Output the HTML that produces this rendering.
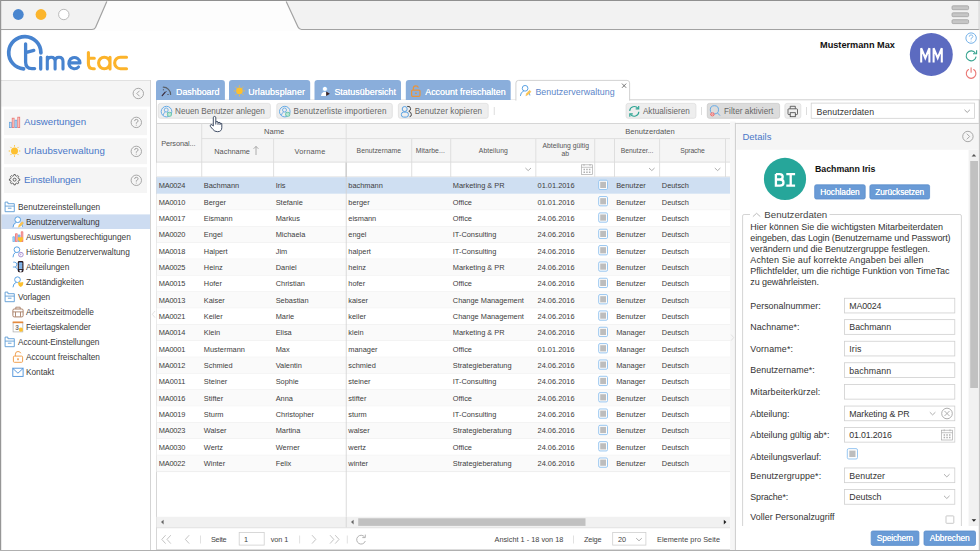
<!DOCTYPE html><html><head><meta charset="utf-8"><title>TimeTac</title><style>
*{box-sizing:border-box;margin:0;padding:0}
html,body{width:980px;height:551px;overflow:hidden;background:#fff}
body{font-family:"Liberation Sans",sans-serif;color:#404040;position:relative;font-size:8px}
.abs{position:absolute}
.t{position:absolute;white-space:nowrap;line-height:1}
svg{position:absolute;overflow:visible}
</style></head><body>
<svg style="left:0;top:0" width="980" height="551"><rect x="0.00" y="0.00" width="980.00" height="30.00" fill="#f2f2f2"/></svg>
<svg style="left:0;top:0" width="980" height="31" viewBox="0 0 980 31">
<path d="M0 29.5 H92 Q94.500 29.5 95.500 27.500 L106.500 2.500 Q107.500 1 109 1 H285 Q286.500 1 287.300 2.500 L298 27 Q299.200 29.500 301.500 29.500 H980 V31 H0 Z" fill="#fdfdfd"/>
<path d="M0 29.500 H92 Q94.500 29.500 95.500 27.500 L106.800 1.500 M286.200 1.500 L298 27 Q299.200 29.500 301.500 29.500 H980" fill="none" stroke="#a2a2a2" stroke-width="1.200"/>
</svg>
<svg style="left:0;top:0" width="60" height="30">
<circle cx="18.300" cy="14.500" r="5.400" fill="#4a86cf"/>
<circle cx="41" cy="14.500" r="5.400" fill="#fbb52d"/>
<circle cx="63.800" cy="14.500" r="5.200" fill="#fff" stroke="#aaa" stroke-width="0.800"/>
</svg>
<svg style="left:0;top:0" width="980" height="551"><rect x="952.00" y="5.80" width="16.60" height="3.90" fill="#c6c6c6" rx="1.10" stroke="#a2a2a2" stroke-width="0.8"/></svg>
<svg style="left:0;top:0" width="980" height="551"><rect x="952.00" y="12.80" width="16.60" height="3.90" fill="#c6c6c6" rx="1.10" stroke="#a2a2a2" stroke-width="0.8"/></svg>
<svg style="left:0;top:0" width="980" height="551"><rect x="952.00" y="19.70" width="16.60" height="3.90" fill="#c6c6c6" rx="1.10" stroke="#a2a2a2" stroke-width="0.8"/></svg>
<svg style="left:0;top:0" width="140" height="80" viewBox="0 0 140 80" fill="none" stroke-linecap="round" stroke-linejoin="round">
<g stroke="#4783cf">
<path d="M40.900 52.800 A16.100 16.100 0 1 0 23.600 68.800" stroke-width="3.700"/>
<path d="M25.600 43.800 V62 Q25.600 68.600 32 68.600 H34.600 M25.600 52.600 L33.800 50.400" stroke-width="3.300"/>
<path d="M40.700 57.500 V69" stroke-width="3.300"/>
<path d="M47.300 57 V69 M47.300 61.500 Q47.300 57.300 51.200 57.300 Q55.100 57.300 55.100 61.500 V69 M55.100 61.500 Q55.100 57.300 59 57.300 Q63 57.300 63 61.500 V69" stroke-width="3.100"/>
<path d="M69 62.900 H80 A5.600 5.600 0 1 0 78.500 67 " stroke-width="3.100"/>
</g>
<g stroke="#fcb32a" stroke-width="3.100">
<path d="M88.400 52.500 V63.500 Q88.400 68.700 93 68.700 H94.300 M88.400 58.300 H94.300"/>
<path d="M110 57.200 V69 M110 63 A5.700 5.700 0 1 0 98.600 63 A5.700 5.700 0 1 0 110 63"/>
<path d="M126.500 57.200 H120.400 A5.750 5.750 0 1 0 120.400 68.700 H126.500"/>
</g>
</svg>
<div class="t" style="left:820.00px;top:41px;font-size:9.2px;color:#111;font-weight:bold;letter-spacing:-0.012px;">Mustermann Max</div>
<svg style="left:900px;top:30px" width="80" height="50" viewBox="900 30 80 50" fill="none">
<circle cx="931.300" cy="54.500" r="21.500" fill="#5c6bc0"/>
<path d="M921.200 62.500 V48.200 L925.300 58 L929.400 48.200 V62.500 M933.600 62.500 V48.200 L937.700 58 L941.800 48.200 V62.500" stroke="#fff" stroke-width="2.050" stroke-linejoin="miter"/>
<circle cx="971.100" cy="38.100" r="5.200" stroke="#74b1e8" stroke-width="1"/>
<path d="M969.300 36.700 Q969.300 34.900 971.100 34.900 Q972.900 34.900 972.900 36.500 Q972.900 37.600 971.100 38.400 V39.500 M971.100 40.800 V41.600" stroke="#86baea" stroke-width="1"/>
<path d="M975.400 53.200 A5 5 0 1 0 976.100 56.600" stroke="#36a38f" stroke-width="1.100"/>
<path d="M976.600 50.200 V53.800 H973" stroke="#36a38f" stroke-width="1.100"/>
<path d="M968.500 69.500 A4.800 4.800 0 1 0 973.700 69.500 M971.100 67.800 V72.200" stroke="#ea7774" stroke-width="1.100" stroke-linecap="round"/>
</svg>
<div class="abs" style="left:1.2px;top:80px;width:149.8px;height:471px;background:#fff;border-top:1px solid #d4d4d4;border-right:1px solid #d4d4d4"></div>
<svg style="left:0;top:0" width="980" height="551"><rect x="1.20" y="80.60" width="148.80" height="26.00" fill="#f5f5f5"/></svg>
<svg style="left:0;top:0" width="980" height="551" fill="none" stroke="#9a9a9a" stroke-width="0.85"><circle cx="138.3" cy="93.5" r="5.200"/><path d="M139.60000000000002 90.7 L136.8 93.5 L139.60000000000002 96.3"/></svg>
<svg style="left:0;top:0" width="980" height="551"><rect x="4.00" y="109.30" width="143.00" height="25.80" fill="#f5f5f5"/></svg>
<div class="t" style="left:24.10px;top:117px;font-size:9.7px;color:#4a78c8;letter-spacing:-0.001px;">Auswertungen</div>
<svg style="left:0;top:0" width="980" height="551" fill="none" stroke="#9a9a9a" stroke-width="0.85"><circle cx="136.3" cy="122.39999999999999" r="5.200"/><path d="M134.60000000000002 121.1 Q134.60000000000002 119.39999999999999 136.3 119.39999999999999 Q138.10000000000002 119.39999999999999 138.10000000000002 120.89999999999999 Q138.10000000000002 121.99999999999999 136.3 122.8 V123.69999999999999 M136.3 124.8 V125.6" stroke-width="0.9"/></svg>
<svg style="left:0;top:0" width="980" height="551"><rect x="4.00" y="138.30" width="143.00" height="25.80" fill="#f5f5f5"/></svg>
<div class="t" style="left:24.10px;top:146px;font-size:9.7px;color:#4a78c8;letter-spacing:0.029px;">Urlaubsverwaltung</div>
<svg style="left:0;top:0" width="980" height="551" fill="none" stroke="#9a9a9a" stroke-width="0.85"><circle cx="136.3" cy="151.4" r="5.200"/><path d="M134.60000000000002 150.1 Q134.60000000000002 148.4 136.3 148.4 Q138.10000000000002 148.4 138.10000000000002 149.9 Q138.10000000000002 151.0 136.3 151.8 V152.70000000000002 M136.3 153.8 V154.6" stroke-width="0.9"/></svg>
<svg style="left:0;top:0" width="980" height="551"><rect x="4.00" y="167.20" width="143.00" height="25.80" fill="#f5f5f5"/></svg>
<div class="t" style="left:24.10px;top:175px;font-size:9.7px;color:#4a78c8;letter-spacing:-0.112px;">Einstellungen</div>
<svg style="left:0;top:0" width="980" height="551" fill="none" stroke="#9a9a9a" stroke-width="0.85"><circle cx="136.3" cy="180.29999999999998" r="5.200"/><path d="M134.60000000000002 178.99999999999997 Q134.60000000000002 177.29999999999998 136.3 177.29999999999998 Q138.10000000000002 177.29999999999998 138.10000000000002 178.79999999999998 Q138.10000000000002 179.89999999999998 136.3 180.7 V181.6 M136.3 182.7 V183.49999999999997" stroke-width="0.9"/></svg>
<svg style="left:0;top:0" width="60" height="200" viewBox="0 0 60 200">
<g stroke-width="0.8">
<rect x="9.400" y="122.300" width="1.900" height="5.300" fill="#c9e1f6" stroke="#6aa6de"/>
<rect x="12.200" y="118.200" width="1.900" height="9.400" fill="#fad2d0" stroke="#ea7570"/>
<rect x="15" y="120.200" width="1.900" height="7.400" fill="#c9e1f6" stroke="#6aa6de"/>
<rect x="17.800" y="117.200" width="1.900" height="10.400" fill="#fad2d0" stroke="#ea7570"/>
</g>
<g stroke="#fdc02f" stroke-width="1" stroke-linecap="round">
<circle cx="14.500" cy="151" r="3.500" fill="#fdc02f" stroke="none"/>
<path d="M14.500 145.600 V146.200 M14.500 155.800 V156.400 M9.100 151 H9.700 M19.300 151 H19.900 M10.700 147.200 L11.100 147.600 M17.900 154.400 L18.300 154.800 M18.300 147.200 L17.900 147.600 M11.100 154.400 L10.700 154.800"/>
</g>
<g fill="none" stroke="#555" stroke-width="0.900" stroke-linejoin="round">
<path d="M13.93 174.54 L15.27 174.54 L15.63 175.83 L16.61 176.24 L17.77 175.58 L18.72 176.53 L18.06 177.69 L18.47 178.67 L19.76 179.03 L19.76 180.37 L18.47 180.73 L18.06 181.71 L18.72 182.87 L17.77 183.82 L16.61 183.16 L15.63 183.57 L15.27 184.86 L13.93 184.86 L13.57 183.57 L12.59 183.16 L11.43 183.82 L10.48 182.87 L11.14 181.71 L10.73 180.73 L9.44 180.37 L9.44 179.03 L10.73 178.67 L11.14 177.69 L10.48 176.53 L11.43 175.58 L12.59 176.24 L13.57 175.83 Z"/>
<circle cx="14.6" cy="179.7" r="1.500" stroke-width="0.9"/>
</g>
</svg>
<svg style="left:0;top:0" width="980" height="551"><path d="M5.1000000000000005 211.70000000000002 V202.10000000000002 H7.9 V203.70000000000002 H14.3 V211.70000000000002 Z M5.1000000000000005 206.10000000000002 H14.3 M7.9 208.20000000000002 H11.5" fill="#fff" stroke="#5b9bd5" stroke-width="0.900" stroke-linejoin="round"/></svg>
<div class="t" style="left:18.00px;top:203px;font-size:8.3px;color:#3a3a3a;letter-spacing:0.003px;">Benutzereinstellungen</div>
<svg style="left:0;top:0" width="980" height="551"><rect x="1.50" y="214.40" width="148.50" height="14.60" fill="#cddcf1"/></svg>
<svg style="left:0;top:0" width="980" height="551"><path d="M13.399999999999999 227.20000000000002 Q13.5 223.5 16.2 222.60000000000002 H19.2 Q21.799999999999997 223.5 22.2 227.20000000000002 Z" fill="#fff"/><circle cx="17.70" cy="219.70" r="2.850" fill="#fff" stroke="#5aa2e3" stroke-width="1"/><path d="M13.00 226.90 Q13.10 223.70 16.10 222.40" fill="none" stroke="#5aa2e3" stroke-width="1" stroke-linecap="round"/><path d="M21.1 223.10000000000002 Q22.2 224.3 22.5 226.9" fill="none" stroke="#5aa2e3" stroke-width="0.9"/><path d="M18.4 227.20000000000002 L19.1 224.8 L22.2 221.70000000000002 L23.6 223.10000000000002 L20.5 226.20000000000002 Z" fill="#fbc54f" stroke="#f2b13c" stroke-width="0.4"/></svg>
<div class="t" style="left:25.90px;top:218px;font-size:8.3px;color:#3a3a3a;letter-spacing:0.026px;">Benutzerverwaltung</div>
<svg style="left:0;top:0" width="980" height="551"><rect x="12.5" y="236.3" width="2.400" height="5.800" rx="0.9" fill="#7ab8ea"/><rect x="13.299999999999999" y="237.3" width="0.800" height="4" fill="#b5d8f4"/><rect x="15.0" y="233.20000000000002" width="2.700" height="8.900" rx="0.9" fill="#ef8080"/><rect x="15.95" y="234.3" width="0.800" height="7" fill="#f7b4b4"/><rect x="17.799999999999997" y="234.5" width="2.700" height="7.600" rx="0.9" fill="#7ab8ea"/><rect x="20.799999999999997" y="231.20000000000002" width="2.500" height="10.900" rx="0.9" fill="#ef8080"/><rect x="21.65" y="232.3" width="0.800" height="5" fill="#f7b4b4"/><path d="M18.0 237.20000000000002 H23.0 V239.20000000000002 Q22.799999999999997 241.10000000000002 20.5 242.20000000000002 Q18.2 241.10000000000002 18.0 239.20000000000002 Z" fill="#fdc02f"/></svg>
<div class="t" style="left:25.90px;top:233px;font-size:8.3px;color:#3a3a3a;letter-spacing:-0.013px;">Auswertungsberechtigungen</div>
<svg style="left:0;top:0" width="980" height="551"><circle cx="16.90" cy="249.70" r="2.850" fill="#fff" stroke="#5aa2e3" stroke-width="1"/><path d="M13.00 256.90 Q13.10 253.70 15.30 252.40" fill="none" stroke="#5aa2e3" stroke-width="1" stroke-linecap="round"/><circle cx="20.9" cy="254.60000000000002" r="2.300" fill="#fff" stroke="#a48bd0" stroke-width="0.950"/><path d="M20.9 253.4 V254.8 H19.9" fill="none" stroke="#a48bd0" stroke-width="0.8"/></svg>
<div class="t" style="left:25.90px;top:248px;font-size:8.3px;color:#3a3a3a;letter-spacing:0.008px;">Historie Benutzerverwaltung</div>
<svg style="left:0;top:0" width="980" height="551"><rect x="18.4" y="261.7" width="4.400" height="9.800" rx="0.7" fill="#5a9be0" stroke="#2a1a1f" stroke-width="1.300"/><path d="M18.6 263.90000000000003 H22.6 M18.6 266.0 H22.6 M18.6 268.1 H22.6" stroke="#cfe2f6" stroke-width="0.7"/><rect x="19.7" y="269.3" width="1.800" height="2.400" fill="#fff"/><rect x="17.799999999999997" y="269.1" width="5.600" height="0.900" fill="#2a1a1f"/><rect x="20.0" y="270.0" width="1.200" height="1.500" fill="#fff"/><path d="M13.2 262.2 H14.799999999999999 Q16.799999999999997 262.40000000000003 16.799999999999997 264.6 Q16.799999999999997 266.90000000000003 15.0 267.0 H12.899999999999999 M15.0 267.0 Q17.0 267.5 17.6 269.8 M16.7 264.6 L17.799999999999997 263.6" fill="none" stroke="#5aa2e3" stroke-width="0.9"/></svg>
<div class="t" style="left:25.90px;top:263px;font-size:8.3px;color:#3a3a3a;letter-spacing:-0.044px;">Abteilungen</div>
<svg style="left:0;top:0" width="980" height="551"><circle cx="17.50" cy="279.70" r="2.850" fill="#fff" stroke="#5aa2e3" stroke-width="1"/><path d="M13.00 286.90 Q13.10 283.70 15.90 282.40" fill="none" stroke="#5aa2e3" stroke-width="1" stroke-linecap="round"/><path d="M18.2 282.0 Q20.7 282.8 23.2 282.0 V284.0 Q23.0 286.0 20.7 287.0 Q18.4 286.0 18.2 284.0 Z" fill="#fdc02f"/></svg>
<div class="t" style="left:25.90px;top:278px;font-size:8.3px;color:#3a3a3a;letter-spacing:-0.036px;">Zuständigkeiten</div>
<svg style="left:0;top:0" width="980" height="551"><path d="M5.1000000000000005 301.7 V292.09999999999997 H7.9 V293.7 H14.3 V301.7 Z M5.1000000000000005 296.09999999999997 H14.3 M7.9 298.2 H11.5" fill="#fff" stroke="#5b9bd5" stroke-width="0.900" stroke-linejoin="round"/></svg>
<div class="t" style="left:18.00px;top:293px;font-size:8.3px;color:#3a3a3a;letter-spacing:-0.095px;">Vorlagen</div>
<svg style="left:0;top:0" width="980" height="551"><rect x="12.899999999999999" y="309.0" width="10.200" height="7.900" rx="1.300" fill="#fff" stroke="#a98068" stroke-width="1"/><path d="M15.799999999999999 309.0 V307.2 H20.2 V309.0 M12.899999999999999 311.90000000000003 H23.1 M15.5 311.90000000000003 V316.7 M20.5 311.90000000000003 V316.7" fill="none" stroke="#a98068" stroke-width="0.9"/></svg>
<div class="t" style="left:25.90px;top:308px;font-size:8.3px;color:#3a3a3a;letter-spacing:0.011px;">Arbeitszeitmodelle</div>
<svg style="left:0;top:0" width="980" height="551"><rect x="13.1" y="322.3" width="9.700" height="9.600" fill="#fff" stroke="#b5b5b5" stroke-width="0.8"/><rect x="12.7" y="321.5" width="10.500" height="1.700" fill="#e58a3c"/><text x="15.2" y="330.1" font-family="Liberation Sans" font-size="6.500" font-weight="bold" fill="#777">3</text><circle cx="20.9" cy="329.7" r="2.100" fill="#fdc02f"/></svg>
<div class="t" style="left:25.90px;top:323px;font-size:8.3px;color:#3a3a3a;letter-spacing:-0.102px;">Feiertagskalender</div>
<svg style="left:0;top:0" width="980" height="551"><path d="M5.1000000000000005 346.7 V337.09999999999997 H7.9 V338.7 H14.3 V346.7 Z M5.1000000000000005 341.09999999999997 H14.3 M7.9 343.2 H11.5" fill="#fff" stroke="#5b9bd5" stroke-width="0.900" stroke-linejoin="round"/></svg>
<div class="t" style="left:18.00px;top:338px;font-size:8.3px;color:#3a3a3a;letter-spacing:-0.060px;">Account-Einstellungen</div>
<svg style="left:0;top:0" width="980" height="551"><rect x="13.399999999999999" y="356.1" width="9.200" height="6.200" rx="1" fill="#fff" stroke="#f0a050" stroke-width="1"/><path d="M15.399999999999999 356.1 V354.2 Q15.399999999999999 351.5 18.0 351.5 Q20.2 351.5 20.799999999999997 353.3" fill="none" stroke="#f0a050" stroke-width="1"/><rect x="17.2" y="358.3" width="1.600" height="1.900" fill="#f0a050"/></svg>
<div class="t" style="left:25.90px;top:353px;font-size:8.3px;color:#3a3a3a;letter-spacing:-0.039px;">Account freischalten</div>
<svg style="left:0;top:0" width="980" height="551"><rect x="12.799999999999999" y="368.2" width="10.300" height="8.200" fill="#fff" stroke="#4a90d9" stroke-width="0.900"/><path d="M12.799999999999999 368.40000000000003 L17.95 373.2 L23.1 368.40000000000003" fill="none" stroke="#4a90d9" stroke-width="0.9"/></svg>
<div class="t" style="left:25.90px;top:368px;font-size:8.3px;color:#3a3a3a;letter-spacing:-0.008px;">Kontakt</div>
<svg style="left:0;top:0" width="980" height="551"><rect x="156.00" y="99.00" width="1.00" height="452.00" fill="#d6d6d6"/></svg>
<svg style="left:0;top:0" width="980" height="551"><rect x="156.00" y="99.20" width="360.00" height="0.80" fill="#e9e9e9"/></svg>
<svg style="left:0;top:0" width="980" height="551"><path d="M156 100 V83 Q156 80 159 80 H221.9 Q224.9 80 224.9 83 V100 Z" fill="#8aaedb"/></svg>
<div class="t" style="left:176.00px;top:88px;font-size:8.9px;color:#fff;text-shadow:0 0 0.4px #fff;letter-spacing:-0.005px;">Dashboard</div>
<svg style="left:0;top:0" width="980" height="551"><path d="M229 100 V83 Q229 80 232 80 H307.2 Q310.2 80 310.2 83 V100 Z" fill="#8aaedb"/></svg>
<div class="t" style="left:248.20px;top:88px;font-size:8.9px;color:#fff;text-shadow:0 0 0.4px #fff;letter-spacing:0.124px;">Urlaubsplaner</div>
<svg style="left:0;top:0" width="980" height="551"><path d="M314.5 100 V83 Q314.5 80 317.5 80 H398 Q401 80 401 83 V100 Z" fill="#8aaedb"/></svg>
<div class="t" style="left:334.40px;top:88px;font-size:8.9px;color:#fff;text-shadow:0 0 0.4px #fff;letter-spacing:0.032px;">Statusübersicht</div>
<svg style="left:0;top:0" width="980" height="551"><path d="M405.8 100 V83 Q405.8 80 408.8 80 H507.7 Q510.7 80 510.7 83 V100 Z" fill="#8aaedb"/></svg>
<div class="t" style="left:425.20px;top:88px;font-size:8.9px;color:#fff;text-shadow:0 0 0.4px #fff;letter-spacing:0.034px;">Account freischalten</div>
<svg style="left:0;top:0" width="980" height="551"><rect x="629.00" y="99.30" width="351.00" height="1.00" fill="#cfcfcf"/></svg>
<svg style="left:0;top:0" width="980" height="551"><path d="M515.900 100.600 V83 Q515.900 80.400 518.500 80.400 H627 Q629.600 80.400 629.600 83 V100.600" fill="#fff" stroke="#cdcdcd" stroke-width="0.9"/></svg>
<div class="t" style="left:535.40px;top:88px;font-size:8.9px;color:#5b86c9;letter-spacing:0.055px;">Benutzerverwaltung</div>
<svg style="left:0;top:0" width="980" height="551"><path d="M622 83.600 L626.200 87.800 M626.200 83.600 L622 87.800" stroke="#666" stroke-width="0.9"/></svg>
<svg style="left:0;top:0" width="980" height="551" fill="none">
<path d="M163.300 87.200 A7.300 7.300 0 0 1 170.600 94.500" stroke="#5a6068" stroke-width="1.200" stroke-linecap="round"/><path d="M162.200 95.600 L165.200 92.200" stroke="#3a2a3a" stroke-width="1.200" stroke-linecap="round"/><path d="M163.400 89.400 V90 M166.500 91.300 L166.100 91.700 M167.600 94.500 H168.400" stroke="#5a6068" stroke-width="0.900" stroke-linecap="round"/>
<g stroke="#fdc02f" stroke-width="0.9" stroke-linecap="round"><circle cx="239.400" cy="90.900" r="3.300" fill="#fdc02f" stroke="none"/>
<path d="M239.400 85.700 V86.400 M239.400 95.400 V96.100 M234.200 90.900 H234.900 M243.900 90.900 H244.600 M235.700 87.200 L236.200 87.700 M242.600 94.100 L243.100 94.600 M243.100 87.200 L242.600 87.700 M236.200 94.100 L235.700 94.600"/></g>
<circle cx="324.900" cy="88.900" r="2.500" fill="#fff" stroke="#6aa6e4" stroke-width="0.600"/><path d="M321 95.900 Q321.200 92.600 323.600 91.900 H326.200 V95.900 Z" fill="#fff"/><path d="M326.200 91.500 L329.900 93.700 L326.200 95.900 Z" fill="#3a2020"/>
<rect x="411.600" y="90.100" width="8.400" height="6.200" rx="1" stroke="#ea943a" stroke-width="1.200"/><path d="M413.300 90.100 V88.200 Q413.300 85.800 415.800 85.800 Q417.900 85.800 418.400 87.600" stroke="#ea943a" stroke-width="1.200"/><ellipse cx="415.900" cy="93.300" rx="1.100" ry="0.800" fill="#ea943a"/>

</svg>
<svg style="left:0;top:0" width="980" height="551"><path d="M520.8000000000001 95.80000000000001 Q520.9 92.10000000000001 523.6 91.2 H526.6 Q529.2 92.10000000000001 529.6 95.80000000000001 Z" fill="#fff"/><circle cx="525.10" cy="88.30" r="2.850" fill="#fff" stroke="#5aa2e3" stroke-width="1"/><path d="M520.40 95.50 Q520.50 92.30 523.50 91.00" fill="none" stroke="#5aa2e3" stroke-width="1" stroke-linecap="round"/><path d="M528.5 91.7 Q529.6 92.9 529.9 95.5" fill="none" stroke="#5aa2e3" stroke-width="0.9"/><path d="M525.8000000000001 95.80000000000001 L526.5 93.4 L529.6 90.30000000000001 L531.0 91.7 L527.9 94.80000000000001 Z" fill="#fbc54f" stroke="#f2b13c" stroke-width="0.4"/></svg>
<svg style="left:0;top:0" width="980" height="551"><rect x="158.30" y="103.40" width="112.10" height="14.90" fill="#eeeeee" rx="2.10" stroke="#dedede" stroke-width="0.8"/></svg>
<div class="t" style="left:175.10px;top:108px;font-size:8.15px;color:#666;letter-spacing:-0.008px;">Neuen Benutzer anlegen</div>
<svg style="left:0;top:0" width="980" height="551"><rect x="276.80" y="103.40" width="115.50" height="14.90" fill="#eeeeee" rx="2.10" stroke="#dedede" stroke-width="0.8"/></svg>
<div class="t" style="left:293.60px;top:108px;font-size:8.15px;color:#666;letter-spacing:0.123px;">Benutzerliste importieren</div>
<svg style="left:0;top:0" width="980" height="551"><rect x="398.40" y="103.40" width="89.80" height="14.90" fill="#eeeeee" rx="2.10" stroke="#dedede" stroke-width="0.8"/></svg>
<div class="t" style="left:414.70px;top:108px;font-size:8.15px;color:#666;letter-spacing:0.091px;">Benutzer kopieren</div>
<svg style="left:0;top:0" width="980" height="551"><rect x="626.10" y="103.40" width="69.80" height="14.90" fill="#eeeeee" rx="2.10" stroke="#dedede" stroke-width="0.8"/></svg>
<div class="t" style="left:642.90px;top:108px;font-size:8.15px;color:#666;letter-spacing:0.037px;">Aktualisieren</div>
<svg style="left:0;top:0" width="980" height="551"><rect x="707.30" y="103.40" width="72.30" height="14.90" fill="#dcdcdc" rx="2.10" stroke="#c9c9c9" stroke-width="0.8"/></svg>
<div class="t" style="left:724.10px;top:108px;font-size:8.15px;color:#666;letter-spacing:0.063px;">Filter aktiviert</div>
<svg style="left:0;top:0" width="980" height="551"><rect x="784.90" y="103.40" width="15.90" height="14.90" fill="#eeeeee" rx="2.10" stroke="#dedede" stroke-width="0.8"/></svg>
<svg style="left:0;top:0" width="980" height="551"><rect x="493.80" y="107.00" width="0.80" height="8.00" fill="#d5d5d5"/></svg>
<svg style="left:0;top:0" width="980" height="551"><rect x="701.20" y="107.00" width="0.80" height="8.00" fill="#d5d5d5"/></svg>
<svg style="left:0;top:0" width="980" height="551"><rect x="806.10" y="107.00" width="0.80" height="8.00" fill="#d5d5d5"/></svg>
<svg style="left:0;top:0" width="980" height="551"><rect x="811.20" y="103.10" width="163.30" height="15.20" fill="#fff" stroke="#d0d0d0" stroke-width="0.8"/></svg>
<div class="t" style="left:816.50px;top:108px;font-size:8.7px;color:#333;letter-spacing:0.092px;">Benutzerdaten</div>
<svg style="left:0;top:0" width="980" height="551" fill="none"><path d="M964.500 109.800 L967.200 112.400 L969.900 109.800" stroke="#888" stroke-width="0.8"/></svg>
<svg style="left:0;top:0" width="980" height="551" fill="none"><circle cx="166.5" cy="111.6" r="5.300" stroke="#5fa8e6" stroke-width="0.950"/><circle cx="166.2" cy="110.0" r="2" stroke="#5fa8e6" stroke-width="0.850"/><path d="M163.1 115.39999999999999 Q163.3 112.69999999999999 165.3 112.19999999999999 M167.3 112.19999999999999 Q168.1 112.39999999999999 168.5 113.0" stroke="#5fa8e6" stroke-width="0.850"/><circle cx="169.4" cy="114.3" r="2.500" fill="#63c3a4"/><circle cx="169.4" cy="114.3" r="1.300" stroke="#fff" stroke-width="0.6"/><path d="M168.7 114.3 H170.1 M169.4 113.6 V115.0" stroke="#fff" stroke-width="0.5"/><circle cx="284.8" cy="111.6" r="5.300" stroke="#5fa8e6" stroke-width="0.950"/><circle cx="284.5" cy="110.0" r="2" stroke="#5fa8e6" stroke-width="0.850"/><path d="M281.40000000000003 115.39999999999999 Q281.6 112.69999999999999 283.6 112.19999999999999 M285.6 112.19999999999999 Q286.40000000000003 112.39999999999999 286.8 113.0" stroke="#5fa8e6" stroke-width="0.850"/><circle cx="287.7" cy="114.3" r="2.500" fill="#63c3a4"/><circle cx="287.7" cy="114.3" r="1.300" stroke="#fff" stroke-width="0.6"/><path d="M287.0 114.3 H288.40000000000003 M287.7 113.6 V115.0" stroke="#fff" stroke-width="0.5"/>
<path d="M407.200 106.400 Q410.600 105.900 410.600 108.700 Q410.600 110.700 408.800 111.300 Q411.400 112.100 411.400 114.700 Q411.400 116.500 409.600 116.700" stroke="#444" stroke-width="1"/>
<circle cx="404.700" cy="109" r="2.500" fill="#eee" stroke="#5aa2e3" stroke-width="1"/>
<rect x="401.400" y="112.100" width="7" height="5" rx="2.200" fill="#eee" stroke="#5aa2e3" stroke-width="1"/>
<g stroke="#2fa594" stroke-width="1.150">
<path d="M629.700 111 A4.600 4.600 0 0 1 638 108.400"/><path d="M638.700 105.900 V108.900 H635.700" stroke-linejoin="miter"/>
<path d="M638.800 111.700 A4.600 4.600 0 0 1 630.500 114.300"/><path d="M629.800 116.800 V113.800 H632.800"/>
</g>
<circle cx="714.400" cy="109.800" r="4.100" stroke="#5fa8e6" stroke-width="0.950"/><path d="M717.400 112.800 L720 115.600" stroke="#5fa8e6" stroke-width="1"/>
<circle cx="712.400" cy="114.300" r="2.100" fill="#ea6b6b"/><ellipse cx="712.400" cy="114.300" rx="0.7" ry="1.100" stroke="#fff" stroke-width="0.5"/>
<g stroke="#444" stroke-width="0.800" fill="#eee"><path d="M790.200 108.800 V106.300 H795.300 V108.800"/><rect x="788" y="108.800" width="9.500" height="5.800" rx="0.8"/><rect x="790.200" y="112.700" width="5.100" height="4"/></g>
</svg>
<div class="abs" style="left:156.5px;top:123px;width:573.5px;height:39.2px;background:#f5f5f5;border-top:1px solid #d6d6d6"></div>
<svg style="left:0;top:0" width="980" height="551"><rect x="201.70" y="138.20" width="528.30" height="0.90" fill="#dcdcdc"/></svg>
<svg style="left:0;top:0" width="980" height="551"><rect x="156.50" y="161.70" width="573.50" height="1.00" fill="#d6d6d6"/></svg>
<svg style="left:0;top:0" width="980" height="551"><rect x="156.50" y="162.70" width="573.50" height="14.30" fill="#fff"/></svg>
<svg style="left:0;top:0" width="980" height="551"><rect x="156.50" y="176.40" width="573.50" height="0.80" fill="#e2e2e2"/></svg>
<svg style="left:0;top:0" width="980" height="551"><rect x="201.30" y="123.50" width="0.90" height="53.50" fill="#dcdcdc"/></svg>
<svg style="left:0;top:0" width="980" height="551"><rect x="273.20" y="139.00" width="0.90" height="38.00" fill="#dcdcdc"/></svg>
<svg style="left:0;top:0" width="980" height="551"><rect x="411.30" y="139.00" width="0.90" height="38.00" fill="#dcdcdc"/></svg>
<svg style="left:0;top:0" width="980" height="551"><rect x="450.30" y="139.00" width="0.90" height="38.00" fill="#dcdcdc"/></svg>
<svg style="left:0;top:0" width="980" height="551"><rect x="535.40" y="139.00" width="0.90" height="38.00" fill="#dcdcdc"/></svg>
<svg style="left:0;top:0" width="980" height="551"><rect x="594.30" y="139.00" width="0.90" height="38.00" fill="#dcdcdc"/></svg>
<svg style="left:0;top:0" width="980" height="551"><rect x="614.10" y="139.00" width="0.90" height="38.00" fill="#dcdcdc"/></svg>
<svg style="left:0;top:0" width="980" height="551"><rect x="659.20" y="139.00" width="0.90" height="38.00" fill="#dcdcdc"/></svg>
<svg style="left:0;top:0" width="980" height="551"><rect x="725.00" y="139.00" width="0.90" height="38.00" fill="#dcdcdc"/></svg>
<div class="t" style="left:178.25px;top:140px;font-size:7.4px;color:#555;transform:translateX(-50%);letter-spacing:-0.107px;">Personal...</div>
<div class="t" style="left:274.20px;top:128px;font-size:7.6px;color:#555;transform:translateX(-50%);letter-spacing:0.009px;">Name</div>
<div class="t" style="left:650.01px;top:128px;font-size:7.6px;color:#555;transform:translateX(-50%);letter-spacing:0.013px;">Benutzerdaten</div>
<div class="t" style="left:214.30px;top:148px;font-size:7.4px;color:#555;letter-spacing:-0.012px;">Nachname</div>
<svg style="left:0;top:0" width="980" height="551" fill="none"><path d="M256 155 V146.400 M253.600 148.800 L256 146.400 L258.400 148.800" stroke="#999" stroke-width="0.8"/></svg>
<div class="t" style="left:310.01px;top:148px;font-size:7.4px;color:#555;transform:translateX(-50%);letter-spacing:0.213px;">Vorname</div>
<div class="t" style="left:378.81px;top:148px;font-size:6.8px;color:#555;transform:translateX(-50%);letter-spacing:0.016px;">Benutzername</div>
<div class="t" style="left:430.34px;top:148px;font-size:6.8px;color:#555;transform:translateX(-50%);letter-spacing:0.073px;">Mitarbe...</div>
<div class="t" style="left:493.34px;top:148px;font-size:6.8px;color:#555;transform:translateX(-50%);letter-spacing:0.080px;">Abteilung</div>
<div class="t" style="left:565.70px;top:143px;font-size:6.8px;color:#555;transform:translateX(-50%);letter-spacing:-0.000px;">Abteilung gültig</div>
<div class="t" style="left:565.20px;top:151px;font-size:6.8px;color:#555;transform:translateX(-50%);">ab</div>
<div class="t" style="left:637.01px;top:148px;font-size:6.8px;color:#555;transform:translateX(-50%);letter-spacing:0.019px;">Benutzer...</div>
<div class="t" style="left:692.43px;top:148px;font-size:6.8px;color:#555;transform:translateX(-50%);letter-spacing:-0.138px;">Sprache</div>
<svg style="left:0;top:0" width="980" height="551" fill="none" stroke="#999" stroke-width="0.8">
<path d="M525.400 168 L528.200 170.600 L531 168 M649 168 L651.800 170.600 L654.600 168 M714.800 168 L717.600 170.600 L720.400 168"/>
<g stroke="#aaa" stroke-width="0.7"><rect x="581.400" y="164.800" width="11.200" height="9.800"/><path d="M581.400 167.300 H592.600 M584 164 V166 M590 164 V166"/><path d="M583.500 169.600 H585 M586.200 169.600 H587.700 M588.900 169.600 H590.400 M583.500 172.200 H585 M586.200 172.200 H587.700 M588.900 172.200 H590.400" stroke-width="1.500" stroke="#b0b0b0"/></g>
</svg>
<svg style="left:0;top:0" width="980" height="551"><rect x="156.5" y="177.20" width="573.5" height="16.64" fill="#cfdff2"/><rect x="156.5" y="193.84" width="573.5" height="16.34" fill="#fafafa"/><rect x="156.5" y="209.73" width="573.5" height="0.9" fill="#ececec"/><rect x="156.5" y="210.18" width="573.5" height="16.34" fill="#fff"/><rect x="156.5" y="226.07" width="573.5" height="0.9" fill="#ececec"/><rect x="156.5" y="226.52" width="573.5" height="16.34" fill="#fafafa"/><rect x="156.5" y="242.41" width="573.5" height="0.9" fill="#ececec"/><rect x="156.5" y="242.86" width="573.5" height="16.34" fill="#fff"/><rect x="156.5" y="258.75" width="573.5" height="0.9" fill="#ececec"/><rect x="156.5" y="259.20" width="573.5" height="16.34" fill="#fafafa"/><rect x="156.5" y="275.09" width="573.5" height="0.9" fill="#ececec"/><rect x="156.5" y="275.54" width="573.5" height="16.34" fill="#fff"/><rect x="156.5" y="291.43" width="573.5" height="0.9" fill="#ececec"/><rect x="156.5" y="291.88" width="573.5" height="16.34" fill="#fafafa"/><rect x="156.5" y="307.77" width="573.5" height="0.9" fill="#ececec"/><rect x="156.5" y="308.22" width="573.5" height="16.34" fill="#fff"/><rect x="156.5" y="324.11" width="573.5" height="0.9" fill="#ececec"/><rect x="156.5" y="324.56" width="573.5" height="16.34" fill="#fafafa"/><rect x="156.5" y="340.45" width="573.5" height="0.9" fill="#ececec"/><rect x="156.5" y="340.90" width="573.5" height="16.34" fill="#fff"/><rect x="156.5" y="356.79" width="573.5" height="0.9" fill="#ececec"/><rect x="156.5" y="357.24" width="573.5" height="16.34" fill="#fafafa"/><rect x="156.5" y="373.13" width="573.5" height="0.9" fill="#ececec"/><rect x="156.5" y="373.58" width="573.5" height="16.34" fill="#fff"/><rect x="156.5" y="389.47" width="573.5" height="0.9" fill="#ececec"/><rect x="156.5" y="389.92" width="573.5" height="16.34" fill="#fafafa"/><rect x="156.5" y="405.81" width="573.5" height="0.9" fill="#ececec"/><rect x="156.5" y="406.26" width="573.5" height="16.34" fill="#fff"/><rect x="156.5" y="422.15" width="573.5" height="0.9" fill="#ececec"/><rect x="156.5" y="422.60" width="573.5" height="16.34" fill="#fafafa"/><rect x="156.5" y="438.49" width="573.5" height="0.9" fill="#ececec"/><rect x="156.5" y="438.94" width="573.5" height="16.34" fill="#fff"/><rect x="156.5" y="454.83" width="573.5" height="0.9" fill="#ececec"/><rect x="156.5" y="455.28" width="573.5" height="16.34" fill="#fafafa"/><rect x="156.5" y="471.17" width="573.5" height="0.9" fill="#ececec"/></svg>
<div class="t" style="left:158.80px;top:182px;font-size:7.4px;color:#3d3d3d;letter-spacing:-0.213px;">MA0024</div>
<div class="t" style="left:203.80px;top:182px;font-size:7.4px;color:#3d3d3d;">Bachmann</div>
<div class="t" style="left:275.70px;top:182px;font-size:7.4px;color:#3d3d3d;">Iris</div>
<div class="t" style="left:348.30px;top:182px;font-size:7.4px;color:#3d3d3d;">bachmann</div>
<div class="t" style="left:452.80px;top:182px;font-size:7.4px;color:#3d3d3d;">Marketing &amp; PR</div>
<div class="t" style="left:537.60px;top:182px;font-size:7.4px;color:#3d3d3d;">01.01.2016</div>
<div class="t" style="left:616.20px;top:182px;font-size:7.4px;color:#3d3d3d;">Benutzer</div>
<div class="t" style="left:661.80px;top:182px;font-size:7.4px;color:#3d3d3d;">Deutsch</div>
<div class="t" style="left:158.80px;top:199px;font-size:7.4px;color:#3d3d3d;letter-spacing:-0.213px;">MA0010</div>
<div class="t" style="left:203.80px;top:199px;font-size:7.4px;color:#3d3d3d;">Berger</div>
<div class="t" style="left:275.70px;top:199px;font-size:7.4px;color:#3d3d3d;">Stefanie</div>
<div class="t" style="left:348.30px;top:199px;font-size:7.4px;color:#3d3d3d;">berger</div>
<div class="t" style="left:452.80px;top:199px;font-size:7.4px;color:#3d3d3d;">Office</div>
<div class="t" style="left:537.60px;top:199px;font-size:7.4px;color:#3d3d3d;">01.01.2016</div>
<div class="t" style="left:616.20px;top:199px;font-size:7.4px;color:#3d3d3d;">Benutzer</div>
<div class="t" style="left:661.80px;top:199px;font-size:7.4px;color:#3d3d3d;">Deutsch</div>
<div class="t" style="left:158.80px;top:215px;font-size:7.4px;color:#3d3d3d;letter-spacing:-0.213px;">MA0017</div>
<div class="t" style="left:203.80px;top:215px;font-size:7.4px;color:#3d3d3d;">Eismann</div>
<div class="t" style="left:275.70px;top:215px;font-size:7.4px;color:#3d3d3d;">Markus</div>
<div class="t" style="left:348.30px;top:215px;font-size:7.4px;color:#3d3d3d;">eismann</div>
<div class="t" style="left:452.80px;top:215px;font-size:7.4px;color:#3d3d3d;">Office</div>
<div class="t" style="left:537.60px;top:215px;font-size:7.4px;color:#3d3d3d;">24.06.2016</div>
<div class="t" style="left:616.20px;top:215px;font-size:7.4px;color:#3d3d3d;">Benutzer</div>
<div class="t" style="left:661.80px;top:215px;font-size:7.4px;color:#3d3d3d;">Deutsch</div>
<div class="t" style="left:158.80px;top:231px;font-size:7.4px;color:#3d3d3d;letter-spacing:-0.213px;">MA0020</div>
<div class="t" style="left:203.80px;top:231px;font-size:7.4px;color:#3d3d3d;">Engel</div>
<div class="t" style="left:275.70px;top:231px;font-size:7.4px;color:#3d3d3d;">Michaela</div>
<div class="t" style="left:348.30px;top:231px;font-size:7.4px;color:#3d3d3d;">engel</div>
<div class="t" style="left:452.80px;top:231px;font-size:7.4px;color:#3d3d3d;">IT-Consulting</div>
<div class="t" style="left:537.60px;top:231px;font-size:7.4px;color:#3d3d3d;">24.06.2016</div>
<div class="t" style="left:616.20px;top:231px;font-size:7.4px;color:#3d3d3d;">Benutzer</div>
<div class="t" style="left:661.80px;top:231px;font-size:7.4px;color:#3d3d3d;">Deutsch</div>
<div class="t" style="left:158.80px;top:248px;font-size:7.4px;color:#3d3d3d;letter-spacing:-0.213px;">MA0018</div>
<div class="t" style="left:203.80px;top:248px;font-size:7.4px;color:#3d3d3d;">Halpert</div>
<div class="t" style="left:275.70px;top:248px;font-size:7.4px;color:#3d3d3d;">Jim</div>
<div class="t" style="left:348.30px;top:248px;font-size:7.4px;color:#3d3d3d;">halpert</div>
<div class="t" style="left:452.80px;top:248px;font-size:7.4px;color:#3d3d3d;">IT-Consulting</div>
<div class="t" style="left:537.60px;top:248px;font-size:7.4px;color:#3d3d3d;">24.06.2016</div>
<div class="t" style="left:616.20px;top:248px;font-size:7.4px;color:#3d3d3d;">Benutzer</div>
<div class="t" style="left:661.80px;top:248px;font-size:7.4px;color:#3d3d3d;">Deutsch</div>
<div class="t" style="left:158.80px;top:264px;font-size:7.4px;color:#3d3d3d;letter-spacing:-0.213px;">MA0025</div>
<div class="t" style="left:203.80px;top:264px;font-size:7.4px;color:#3d3d3d;">Heinz</div>
<div class="t" style="left:275.70px;top:264px;font-size:7.4px;color:#3d3d3d;">Daniel</div>
<div class="t" style="left:348.30px;top:264px;font-size:7.4px;color:#3d3d3d;">heinz</div>
<div class="t" style="left:452.80px;top:264px;font-size:7.4px;color:#3d3d3d;">Marketing &amp; PR</div>
<div class="t" style="left:537.60px;top:264px;font-size:7.4px;color:#3d3d3d;">24.06.2016</div>
<div class="t" style="left:616.20px;top:264px;font-size:7.4px;color:#3d3d3d;">Benutzer</div>
<div class="t" style="left:661.80px;top:264px;font-size:7.4px;color:#3d3d3d;">Deutsch</div>
<div class="t" style="left:158.80px;top:280px;font-size:7.4px;color:#3d3d3d;letter-spacing:-0.213px;">MA0015</div>
<div class="t" style="left:203.80px;top:280px;font-size:7.4px;color:#3d3d3d;">Hofer</div>
<div class="t" style="left:275.70px;top:280px;font-size:7.4px;color:#3d3d3d;">Christian</div>
<div class="t" style="left:348.30px;top:280px;font-size:7.4px;color:#3d3d3d;">hofer</div>
<div class="t" style="left:452.80px;top:280px;font-size:7.4px;color:#3d3d3d;">Office</div>
<div class="t" style="left:537.60px;top:280px;font-size:7.4px;color:#3d3d3d;">24.06.2016</div>
<div class="t" style="left:616.20px;top:280px;font-size:7.4px;color:#3d3d3d;">Benutzer</div>
<div class="t" style="left:661.80px;top:280px;font-size:7.4px;color:#3d3d3d;">Deutsch</div>
<div class="t" style="left:158.80px;top:297px;font-size:7.4px;color:#3d3d3d;letter-spacing:-0.213px;">MA0013</div>
<div class="t" style="left:203.80px;top:297px;font-size:7.4px;color:#3d3d3d;">Kaiser</div>
<div class="t" style="left:275.70px;top:297px;font-size:7.4px;color:#3d3d3d;">Sebastian</div>
<div class="t" style="left:348.30px;top:297px;font-size:7.4px;color:#3d3d3d;">kaiser</div>
<div class="t" style="left:452.80px;top:297px;font-size:7.4px;color:#3d3d3d;">Change Management</div>
<div class="t" style="left:537.60px;top:297px;font-size:7.4px;color:#3d3d3d;">24.06.2016</div>
<div class="t" style="left:616.20px;top:297px;font-size:7.4px;color:#3d3d3d;">Benutzer</div>
<div class="t" style="left:661.80px;top:297px;font-size:7.4px;color:#3d3d3d;">Deutsch</div>
<div class="t" style="left:158.80px;top:313px;font-size:7.4px;color:#3d3d3d;letter-spacing:-0.213px;">MA0021</div>
<div class="t" style="left:203.80px;top:313px;font-size:7.4px;color:#3d3d3d;">Keiler</div>
<div class="t" style="left:275.70px;top:313px;font-size:7.4px;color:#3d3d3d;">Marie</div>
<div class="t" style="left:348.30px;top:313px;font-size:7.4px;color:#3d3d3d;">keiler</div>
<div class="t" style="left:452.80px;top:313px;font-size:7.4px;color:#3d3d3d;">Change Management</div>
<div class="t" style="left:537.60px;top:313px;font-size:7.4px;color:#3d3d3d;">24.06.2016</div>
<div class="t" style="left:616.20px;top:313px;font-size:7.4px;color:#3d3d3d;">Benutzer</div>
<div class="t" style="left:661.80px;top:313px;font-size:7.4px;color:#3d3d3d;">Deutsch</div>
<div class="t" style="left:158.80px;top:329px;font-size:7.4px;color:#3d3d3d;letter-spacing:-0.213px;">MA0014</div>
<div class="t" style="left:203.80px;top:329px;font-size:7.4px;color:#3d3d3d;">Klein</div>
<div class="t" style="left:275.70px;top:329px;font-size:7.4px;color:#3d3d3d;">Elisa</div>
<div class="t" style="left:348.30px;top:329px;font-size:7.4px;color:#3d3d3d;">klein</div>
<div class="t" style="left:452.80px;top:329px;font-size:7.4px;color:#3d3d3d;">Marketing &amp; PR</div>
<div class="t" style="left:537.60px;top:329px;font-size:7.4px;color:#3d3d3d;">24.06.2016</div>
<div class="t" style="left:616.20px;top:329px;font-size:7.4px;color:#3d3d3d;">Manager</div>
<div class="t" style="left:661.80px;top:329px;font-size:7.4px;color:#3d3d3d;">Deutsch</div>
<div class="t" style="left:158.80px;top:346px;font-size:7.4px;color:#3d3d3d;letter-spacing:-0.213px;">MA0001</div>
<div class="t" style="left:203.80px;top:346px;font-size:7.4px;color:#3d3d3d;">Mustermann</div>
<div class="t" style="left:275.70px;top:346px;font-size:7.4px;color:#3d3d3d;">Max</div>
<div class="t" style="left:348.30px;top:346px;font-size:7.4px;color:#3d3d3d;">manager</div>
<div class="t" style="left:452.80px;top:346px;font-size:7.4px;color:#3d3d3d;">Office</div>
<div class="t" style="left:537.60px;top:346px;font-size:7.4px;color:#3d3d3d;">01.01.2016</div>
<div class="t" style="left:616.20px;top:346px;font-size:7.4px;color:#3d3d3d;">Manager</div>
<div class="t" style="left:661.80px;top:346px;font-size:7.4px;color:#3d3d3d;">Deutsch</div>
<div class="t" style="left:158.80px;top:362px;font-size:7.4px;color:#3d3d3d;letter-spacing:-0.213px;">MA0012</div>
<div class="t" style="left:203.80px;top:362px;font-size:7.4px;color:#3d3d3d;">Schmied</div>
<div class="t" style="left:275.70px;top:362px;font-size:7.4px;color:#3d3d3d;">Valentin</div>
<div class="t" style="left:348.30px;top:362px;font-size:7.4px;color:#3d3d3d;">schmied</div>
<div class="t" style="left:452.80px;top:362px;font-size:7.4px;color:#3d3d3d;">Strategieberatung</div>
<div class="t" style="left:537.60px;top:362px;font-size:7.4px;color:#3d3d3d;">24.06.2016</div>
<div class="t" style="left:616.20px;top:362px;font-size:7.4px;color:#3d3d3d;">Manager</div>
<div class="t" style="left:661.80px;top:362px;font-size:7.4px;color:#3d3d3d;">Deutsch</div>
<div class="t" style="left:158.80px;top:378px;font-size:7.4px;color:#3d3d3d;letter-spacing:-0.103px;">MA0011</div>
<div class="t" style="left:203.80px;top:378px;font-size:7.4px;color:#3d3d3d;">Steiner</div>
<div class="t" style="left:275.70px;top:378px;font-size:7.4px;color:#3d3d3d;">Sophie</div>
<div class="t" style="left:348.30px;top:378px;font-size:7.4px;color:#3d3d3d;">steiner</div>
<div class="t" style="left:452.80px;top:378px;font-size:7.4px;color:#3d3d3d;">IT-Consulting</div>
<div class="t" style="left:537.60px;top:378px;font-size:7.4px;color:#3d3d3d;">24.06.2016</div>
<div class="t" style="left:616.20px;top:378px;font-size:7.4px;color:#3d3d3d;">Manager</div>
<div class="t" style="left:661.80px;top:378px;font-size:7.4px;color:#3d3d3d;">Deutsch</div>
<div class="t" style="left:158.80px;top:395px;font-size:7.4px;color:#3d3d3d;letter-spacing:-0.213px;">MA0016</div>
<div class="t" style="left:203.80px;top:395px;font-size:7.4px;color:#3d3d3d;">Stifter</div>
<div class="t" style="left:275.70px;top:395px;font-size:7.4px;color:#3d3d3d;">Anna</div>
<div class="t" style="left:348.30px;top:395px;font-size:7.4px;color:#3d3d3d;">stifter</div>
<div class="t" style="left:452.80px;top:395px;font-size:7.4px;color:#3d3d3d;">Office</div>
<div class="t" style="left:537.60px;top:395px;font-size:7.4px;color:#3d3d3d;">24.06.2016</div>
<div class="t" style="left:616.20px;top:395px;font-size:7.4px;color:#3d3d3d;">Benutzer</div>
<div class="t" style="left:661.80px;top:395px;font-size:7.4px;color:#3d3d3d;">Deutsch</div>
<div class="t" style="left:158.80px;top:411px;font-size:7.4px;color:#3d3d3d;letter-spacing:-0.213px;">MA0019</div>
<div class="t" style="left:203.80px;top:411px;font-size:7.4px;color:#3d3d3d;">Sturm</div>
<div class="t" style="left:275.70px;top:411px;font-size:7.4px;color:#3d3d3d;">Christopher</div>
<div class="t" style="left:348.30px;top:411px;font-size:7.4px;color:#3d3d3d;">sturm</div>
<div class="t" style="left:452.80px;top:411px;font-size:7.4px;color:#3d3d3d;">IT-Consulting</div>
<div class="t" style="left:537.60px;top:411px;font-size:7.4px;color:#3d3d3d;">24.06.2016</div>
<div class="t" style="left:616.20px;top:411px;font-size:7.4px;color:#3d3d3d;">Benutzer</div>
<div class="t" style="left:661.80px;top:411px;font-size:7.4px;color:#3d3d3d;">Deutsch</div>
<div class="t" style="left:158.80px;top:427px;font-size:7.4px;color:#3d3d3d;letter-spacing:-0.213px;">MA0023</div>
<div class="t" style="left:203.80px;top:427px;font-size:7.4px;color:#3d3d3d;">Walser</div>
<div class="t" style="left:275.70px;top:427px;font-size:7.4px;color:#3d3d3d;">Martina</div>
<div class="t" style="left:348.30px;top:427px;font-size:7.4px;color:#3d3d3d;">walser</div>
<div class="t" style="left:452.80px;top:427px;font-size:7.4px;color:#3d3d3d;">Strategieberatung</div>
<div class="t" style="left:537.60px;top:427px;font-size:7.4px;color:#3d3d3d;">24.06.2016</div>
<div class="t" style="left:616.20px;top:427px;font-size:7.4px;color:#3d3d3d;">Benutzer</div>
<div class="t" style="left:661.80px;top:427px;font-size:7.4px;color:#3d3d3d;">Deutsch</div>
<div class="t" style="left:158.80px;top:444px;font-size:7.4px;color:#3d3d3d;letter-spacing:-0.213px;">MA0030</div>
<div class="t" style="left:203.80px;top:444px;font-size:7.4px;color:#3d3d3d;">Wertz</div>
<div class="t" style="left:275.70px;top:444px;font-size:7.4px;color:#3d3d3d;">Werner</div>
<div class="t" style="left:348.30px;top:444px;font-size:7.4px;color:#3d3d3d;">wertz</div>
<div class="t" style="left:452.80px;top:444px;font-size:7.4px;color:#3d3d3d;">Office</div>
<div class="t" style="left:537.60px;top:444px;font-size:7.4px;color:#3d3d3d;">24.06.2016</div>
<div class="t" style="left:616.20px;top:444px;font-size:7.4px;color:#3d3d3d;">Benutzer</div>
<div class="t" style="left:661.80px;top:444px;font-size:7.4px;color:#3d3d3d;">Deutsch</div>
<div class="t" style="left:158.80px;top:460px;font-size:7.4px;color:#3d3d3d;letter-spacing:-0.213px;">MA0022</div>
<div class="t" style="left:203.80px;top:460px;font-size:7.4px;color:#3d3d3d;">Winter</div>
<div class="t" style="left:275.70px;top:460px;font-size:7.4px;color:#3d3d3d;">Felix</div>
<div class="t" style="left:348.30px;top:460px;font-size:7.4px;color:#3d3d3d;">winter</div>
<div class="t" style="left:452.80px;top:460px;font-size:7.4px;color:#3d3d3d;">Strategieberatung</div>
<div class="t" style="left:537.60px;top:460px;font-size:7.4px;color:#3d3d3d;">24.06.2016</div>
<div class="t" style="left:616.20px;top:460px;font-size:7.4px;color:#3d3d3d;">Benutzer</div>
<div class="t" style="left:661.80px;top:460px;font-size:7.4px;color:#3d3d3d;">Deutsch</div>
<svg style="left:0;top:0" width="980" height="551" fill="none"><rect x="598.700" y="180.20" width="8.800" height="9.300" rx="1.300" fill="#fdfdfd" stroke="#8dc1ef" stroke-width="0.900"/><rect x="600.200" y="181.80" width="5.800" height="6.200" fill="#bdbdbd"/><rect x="598.700" y="196.54" width="8.800" height="9.300" rx="1.300" fill="#fdfdfd" stroke="#8dc1ef" stroke-width="0.900"/><rect x="600.200" y="198.14" width="5.800" height="6.200" fill="#bdbdbd"/><rect x="598.700" y="212.88" width="8.800" height="9.300" rx="1.300" fill="#fdfdfd" stroke="#8dc1ef" stroke-width="0.900"/><rect x="600.200" y="214.48" width="5.800" height="6.200" fill="#bdbdbd"/><rect x="598.700" y="229.22" width="8.800" height="9.300" rx="1.300" fill="#fdfdfd" stroke="#8dc1ef" stroke-width="0.900"/><rect x="600.200" y="230.82" width="5.800" height="6.200" fill="#bdbdbd"/><rect x="598.700" y="245.56" width="8.800" height="9.300" rx="1.300" fill="#fdfdfd" stroke="#8dc1ef" stroke-width="0.900"/><rect x="600.200" y="247.16" width="5.800" height="6.200" fill="#bdbdbd"/><rect x="598.700" y="261.90" width="8.800" height="9.300" rx="1.300" fill="#fdfdfd" stroke="#8dc1ef" stroke-width="0.900"/><rect x="600.200" y="263.50" width="5.800" height="6.200" fill="#bdbdbd"/><rect x="598.700" y="278.24" width="8.800" height="9.300" rx="1.300" fill="#fdfdfd" stroke="#8dc1ef" stroke-width="0.900"/><rect x="600.200" y="279.84" width="5.800" height="6.200" fill="#bdbdbd"/><rect x="598.700" y="294.58" width="8.800" height="9.300" rx="1.300" fill="#fdfdfd" stroke="#8dc1ef" stroke-width="0.900"/><rect x="600.200" y="296.18" width="5.800" height="6.200" fill="#bdbdbd"/><rect x="598.700" y="310.92" width="8.800" height="9.300" rx="1.300" fill="#fdfdfd" stroke="#8dc1ef" stroke-width="0.900"/><rect x="600.200" y="312.52" width="5.800" height="6.200" fill="#bdbdbd"/><rect x="598.700" y="327.26" width="8.800" height="9.300" rx="1.300" fill="#fdfdfd" stroke="#8dc1ef" stroke-width="0.900"/><rect x="600.200" y="328.86" width="5.800" height="6.200" fill="#bdbdbd"/><rect x="598.700" y="343.60" width="8.800" height="9.300" rx="1.300" fill="#fdfdfd" stroke="#8dc1ef" stroke-width="0.900"/><rect x="600.200" y="345.20" width="5.800" height="6.200" fill="#bdbdbd"/><rect x="598.700" y="359.94" width="8.800" height="9.300" rx="1.300" fill="#fdfdfd" stroke="#8dc1ef" stroke-width="0.900"/><rect x="600.200" y="361.54" width="5.800" height="6.200" fill="#bdbdbd"/><rect x="598.700" y="376.28" width="8.800" height="9.300" rx="1.300" fill="#fdfdfd" stroke="#8dc1ef" stroke-width="0.900"/><rect x="600.200" y="377.88" width="5.800" height="6.200" fill="#bdbdbd"/><rect x="598.700" y="392.62" width="8.800" height="9.300" rx="1.300" fill="#fdfdfd" stroke="#8dc1ef" stroke-width="0.900"/><rect x="600.200" y="394.22" width="5.800" height="6.200" fill="#bdbdbd"/><rect x="598.700" y="408.96" width="8.800" height="9.300" rx="1.300" fill="#fdfdfd" stroke="#8dc1ef" stroke-width="0.900"/><rect x="600.200" y="410.56" width="5.800" height="6.200" fill="#bdbdbd"/><rect x="598.700" y="425.30" width="8.800" height="9.300" rx="1.300" fill="#fdfdfd" stroke="#8dc1ef" stroke-width="0.900"/><rect x="600.200" y="426.90" width="5.800" height="6.200" fill="#bdbdbd"/><rect x="598.700" y="441.64" width="8.800" height="9.300" rx="1.300" fill="#fdfdfd" stroke="#8dc1ef" stroke-width="0.900"/><rect x="600.200" y="443.24" width="5.800" height="6.200" fill="#bdbdbd"/><rect x="598.700" y="457.98" width="8.800" height="9.300" rx="1.300" fill="#fdfdfd" stroke="#8dc1ef" stroke-width="0.900"/><rect x="600.200" y="459.58" width="5.800" height="6.200" fill="#bdbdbd"/></svg>
<svg style="left:0;top:0" width="980" height="551"><rect x="345.70" y="123.50" width="0.90" height="39.00" fill="#dcdcdc"/></svg>
<svg style="left:0;top:0" width="980" height="551"><rect x="345.50" y="162.50" width="1.30" height="14.60" fill="#c6c6c6"/></svg>
<svg style="left:0;top:0" width="980" height="551"><rect x="345.80" y="177.20" width="0.80" height="339.60" fill="#d2d2d2"/></svg>
<svg style="left:0;top:0" width="980" height="551"><rect x="156.50" y="516.80" width="573.50" height="10.60" fill="#f1f1f1"/></svg>
<svg style="left:0;top:0" width="980" height="551"><rect x="358.20" y="518.30" width="227.30" height="7.60" fill="#c1c1c1"/></svg>
<svg style="left:0;top:0" width="980" height="551"><rect x="345.80" y="516.80" width="0.80" height="10.60" fill="#d2d2d2"/></svg>
<svg style="left:0;top:0" width="980" height="551"><path d="M163.600 519.800 V524.400 L161 522.100 Z M353.600 519.800 V524.400 L351 522.100 Z" fill="#666"/><path d="M723.800 519.800 V524.400 L726.400 522.100 Z" fill="#222"/></svg>
<svg style="left:0;top:0" width="980" height="551"><rect x="156.50" y="527.40" width="573.50" height="0.80" fill="#dadada"/></svg>
<svg style="left:0;top:0" width="980" height="551"><rect x="156.50" y="549.30" width="573.50" height="0.80" fill="#cfcfcf"/></svg>
<svg style="left:0;top:0" width="980" height="551" fill="none" stroke="#bdbdbd" stroke-width="0.900">
<path d="M165.600 535.200 L161.800 539.400 L165.600 543.600 M170.800 535.200 L167 539.400 L170.800 543.600"/>
<path d="M189.200 535.200 L185.400 539.400 L189.200 543.600"/>
<path d="M312 535.200 L315.800 539.400 L312 543.600"/>
<path d="M330 535.200 L333.800 539.400 L330 543.600 M335.200 535.200 L339 539.400 L335.200 543.600"/>
<path d="M200.500 535.500 V543.500 M299.600 535.500 V543.500 M347.300 535.500 V543.500 M573.500 535.500 V543.500" stroke="#dedede"/>
<path d="M364.600 537 A4.400 4.400 0 1 0 365.300 541" stroke="#aaa"/><path d="M365.300 534.600 V537.600 H362.300" stroke="#aaa"/>
</svg>
<div class="t" style="left:211.00px;top:536px;font-size:7.3px;color:#444;letter-spacing:-0.260px;">Seite</div>
<svg style="left:0;top:0" width="980" height="551"><rect x="239.20" y="532.50" width="25.00" height="12.60" fill="#fff" stroke="#cfcfcf" stroke-width="0.8"/></svg>
<div class="t" style="left:244.00px;top:536px;font-size:7.3px;color:#444;">1</div>
<div class="t" style="left:270.70px;top:536px;font-size:7.3px;color:#444;letter-spacing:-0.040px;">von 1</div>
<div class="t" style="left:494.50px;top:536px;font-size:7.3px;color:#444;letter-spacing:0.016px;">Ansicht 1 - 18 von 18</div>
<div class="t" style="left:583.90px;top:536px;font-size:7.3px;color:#444;letter-spacing:-0.140px;">Zeige</div>
<svg style="left:0;top:0" width="980" height="551"><rect x="612.70" y="532.50" width="33.20" height="12.60" fill="#fff" stroke="#cfcfcf" stroke-width="0.8"/></svg>
<div class="t" style="left:618.00px;top:536px;font-size:7.3px;color:#444;">20</div>
<div class="t" style="left:657.00px;top:536px;font-size:7.3px;color:#444;letter-spacing:0.054px;">Elemente pro Seite</div>
<svg style="left:0;top:0" width="980" height="551" fill="none"><path d="M636.200 538.200 L639 540.800 L641.800 538.200" stroke="#999" stroke-width="0.8"/></svg>
<svg style="left:0;top:0" width="980" height="551"><rect x="730.20" y="121.50" width="5.20" height="429.00" fill="#f6f6f6"/></svg>
<svg style="left:0;top:0" width="980" height="551"><rect x="734.90" y="123.00" width="243.80" height="427.00" fill="#fff"/></svg>
<svg style="left:0;top:0" width="980" height="551"><rect x="734.90" y="122.90" width="243.80" height="1.00" fill="#cdcdcd"/></svg>
<svg style="left:0;top:0" width="980" height="551"><rect x="734.90" y="122.90" width="1.00" height="428.00" fill="#cdcdcd"/></svg>
<svg style="left:0;top:0" width="980" height="551"><rect x="736.20" y="124.00" width="241.80" height="25.80" fill="#f5f5f5"/></svg>
<div class="t" style="left:742.40px;top:132px;font-size:9.5px;color:#4a78c8;letter-spacing:-0.006px;">Details</div>
<svg style="left:0;top:0" width="980" height="551" fill="none" stroke="#9a9a9a" stroke-width="0.85"><circle cx="967.9" cy="136.5" r="5.200"/><path d="M966.8 133.7 L969.6 136.5 L966.8 139.3"/></svg>
<svg style="left:0;top:0" width="980" height="551"><rect x="968.60" y="150.00" width="9.60" height="376.00" fill="#f1f1f1"/></svg>
<svg style="left:0;top:0" width="980" height="551"><rect x="970.20" y="161.00" width="7.80" height="227.00" fill="#c1c1c1"/></svg>
<svg style="left:0;top:0" width="980" height="551"><path d="M971.600 156.600 H976.200 L973.900 154 Z" fill="#555"/><path d="M971.600 519.200 H976.200 L973.900 521.800 Z" fill="#222"/></svg>
<svg style="left:0;top:0" width="980" height="551" fill="none">
<circle cx="785" cy="178.900" r="21.100" fill="#26a69a"/>
<g stroke="#fff" stroke-width="2.300" stroke-linejoin="miter">
<path d="M775.900 174.100 V185.600 H780 Q783.500 185.600 783.500 182.400 Q783.500 179.500 780 179.500 H775.900 M775.900 174.100 H779.600 Q782.700 174.100 782.700 176.800 Q782.700 179.500 779.600 179.500"/>
<path d="M786.300 174.100 H795.100 M790.700 174.100 V185.600 M786.300 185.600 H795.100"/>
</g></svg>
<div class="t" style="left:815.00px;top:165px;font-size:8.8px;color:#111;font-weight:bold;letter-spacing:-0.020px;">Bachmann Iris</div>
<svg style="left:0;top:0" width="980" height="551"><rect x="814.70" y="184.80" width="50.50" height="14.20" fill="#6a9bd6" rx="1.60" stroke="#5c8ecb" stroke-width="0.8"/></svg>
<div class="t" style="left:839.94px;top:188px;font-size:8.3px;color:#fff;transform:translateX(-50%);text-shadow:0 0 0.3px #fff;letter-spacing:-0.023px;">Hochladen</div>
<svg style="left:0;top:0" width="980" height="551"><rect x="869.90" y="184.80" width="59.70" height="14.20" fill="#6a9bd6" rx="1.60" stroke="#5c8ecb" stroke-width="0.8"/></svg>
<div class="t" style="left:899.71px;top:188px;font-size:8.3px;color:#fff;transform:translateX(-50%);text-shadow:0 0 0.3px #fff;letter-spacing:-0.075px;">Zurücksetzen</div>
<svg style="left:0;top:0" width="980" height="551" fill="none" stroke="#cfcfcf" stroke-width="0.9"><path d="M750 214.500 H744.100 Q742.600 214.500 742.600 216 V526 M829.500 214.500 H959.900 Q961.400 214.500 961.400 216 V526"/></svg>
<svg style="left:0;top:0" width="980" height="551" fill="none"><path d="M752.900 216.600 L756.600 213.300 L760.300 216.600" stroke="#aaa" stroke-width="0.8"/></svg>
<div class="t" style="left:764.30px;top:210px;font-size:9.7px;color:#444;letter-spacing:-0.008px;">Benutzerdaten</div>
<div class="t" style="left:750.30px;top:223px;font-size:9.0px;color:#333;letter-spacing:-0.009px;">Hier können Sie die wichtigsten Mitarbeiterdaten</div>
<div class="t" style="left:750.30px;top:234px;font-size:9.0px;color:#333;letter-spacing:-0.105px;">eingeben, das Login (Benutzername und Passwort)</div>
<div class="t" style="left:750.30px;top:245px;font-size:9.0px;color:#333;letter-spacing:-0.022px;">verändern und die Benutzergruppe festlegen.</div>
<div class="t" style="left:750.30px;top:256px;font-size:9.0px;color:#333;letter-spacing:0.139px;">Achten Sie auf korrekte Angaben bei allen</div>
<div class="t" style="left:750.30px;top:267px;font-size:9.0px;color:#333;letter-spacing:-0.016px;">Pflichtfelder, um die richtige Funktion von TimeTac</div>
<div class="t" style="left:750.30px;top:278px;font-size:9.0px;color:#333;letter-spacing:-0.090px;">zu gewährleisten.</div>
<div class="t" style="left:750.30px;top:302px;font-size:8.9px;color:#333;letter-spacing:0.018px;">Personalnummer:</div>
<svg style="left:0;top:0" width="980" height="551"><rect x="844.40" y="298.25" width="110.40" height="14.70" fill="#fff" stroke="#cfcfcf" stroke-width="0.8"/></svg>
<div class="t" style="left:849.30px;top:302px;font-size:8.8px;color:#333;letter-spacing:-0.156px;">MA0024</div>
<div class="t" style="left:750.30px;top:323px;font-size:8.9px;color:#333;letter-spacing:0.036px;">Nachname*:</div>
<svg style="left:0;top:0" width="980" height="551"><rect x="844.40" y="319.65" width="110.40" height="14.70" fill="#fff" stroke="#cfcfcf" stroke-width="0.8"/></svg>
<div class="t" style="left:849.30px;top:323px;font-size:8.8px;color:#333;letter-spacing:-0.039px;">Bachmann</div>
<div class="t" style="left:750.30px;top:345px;font-size:8.9px;color:#333;letter-spacing:0.155px;">Vorname*:</div>
<svg style="left:0;top:0" width="980" height="551"><rect x="844.40" y="341.25" width="110.40" height="14.70" fill="#fff" stroke="#cfcfcf" stroke-width="0.8"/></svg>
<div class="t" style="left:849.30px;top:345px;font-size:8.8px;color:#333;letter-spacing:0.123px;">Iris</div>
<div class="t" style="left:750.30px;top:366px;font-size:8.9px;color:#333;letter-spacing:0.067px;">Benutzername*:</div>
<svg style="left:0;top:0" width="980" height="551"><rect x="844.40" y="362.75" width="110.40" height="14.70" fill="#fff" stroke="#cfcfcf" stroke-width="0.8"/></svg>
<div class="t" style="left:849.30px;top:367px;font-size:8.8px;color:#333;letter-spacing:0.100px;">bachmann</div>
<div class="t" style="left:750.30px;top:388px;font-size:8.9px;color:#333;letter-spacing:0.114px;">Mitarbeiterkürzel:</div>
<svg style="left:0;top:0" width="980" height="551"><rect x="844.40" y="384.45" width="110.40" height="14.70" fill="#fff" stroke="#cfcfcf" stroke-width="0.8"/></svg>
<div class="t" style="left:750.30px;top:410px;font-size:8.9px;color:#333;letter-spacing:-0.043px;">Abteilung:</div>
<svg style="left:0;top:0" width="980" height="551"><rect x="844.40" y="406.05" width="110.40" height="14.70" fill="#fff" stroke="#cfcfcf" stroke-width="0.8"/></svg>
<div class="t" style="left:849.30px;top:410px;font-size:8.8px;color:#333;letter-spacing:-0.094px;">Marketing &amp; PR</div>
<div class="t" style="left:750.30px;top:431px;font-size:8.9px;color:#333;letter-spacing:0.011px;">Abteilung gültig ab*:</div>
<svg style="left:0;top:0" width="980" height="551"><rect x="844.40" y="427.45" width="110.40" height="14.70" fill="#fff" stroke="#cfcfcf" stroke-width="0.8"/></svg>
<div class="t" style="left:849.30px;top:431px;font-size:8.8px;color:#333;letter-spacing:-0.172px;">01.01.2016</div>
<div class="t" style="left:750.30px;top:453px;font-size:8.9px;color:#333;letter-spacing:0.026px;">Abteilungsverlauf:</div>
<div class="t" style="left:750.30px;top:472px;font-size:8.9px;color:#333;letter-spacing:0.115px;">Benutzergruppe*:</div>
<svg style="left:0;top:0" width="980" height="551"><rect x="844.40" y="467.95" width="110.40" height="14.70" fill="#fff" stroke="#cfcfcf" stroke-width="0.8"/></svg>
<div class="t" style="left:849.30px;top:472px;font-size:8.8px;color:#333;letter-spacing:0.068px;">Benutzer</div>
<div class="t" style="left:750.30px;top:493px;font-size:8.9px;color:#333;letter-spacing:-0.136px;">Sprache*:</div>
<svg style="left:0;top:0" width="980" height="551"><rect x="844.40" y="489.55" width="110.40" height="14.70" fill="#fff" stroke="#cfcfcf" stroke-width="0.8"/></svg>
<div class="t" style="left:849.30px;top:493px;font-size:8.8px;color:#333;letter-spacing:-0.014px;">Deutsch</div>
<div class="t" style="left:750.30px;top:513px;font-size:8.9px;color:#333;letter-spacing:0.027px;">Voller Personalzugriff</div>
<svg style="left:0;top:0" width="980" height="551"><rect x="946.00" y="515.90" width="7.80" height="7.40" fill="#fff" rx="0.60" stroke="#bbb" stroke-width="0.8"/></svg>
<svg style="left:0;top:0" width="980" height="551" fill="none" stroke="#999" stroke-width="0.8">
<path d="M929.800 412.200 L932.600 414.900 L935.400 412.200 M944 474.200 L946.800 476.900 L949.600 474.200 M944 495.800 L946.800 498.500 L949.600 495.800"/>
<circle cx="947" cy="413.500" r="5.300" stroke="#9a9a9a"/><path d="M944.500 411 L949.500 416 M949.500 411 L944.500 416" stroke="#9a9a9a"/>
<g stroke="#aaa" stroke-width="0.7"><rect x="941.600" y="430.200" width="11" height="9.800"/><path d="M941.600 432.700 H952.600 M944.200 429.300 V431.300 M950 429.300 V431.300"/><path d="M943.600 435 H945.100 M946.300 435 H947.800 M949 435 H950.500 M943.600 437.600 H945.100 M946.300 437.600 H947.800 M949 437.600 H950.500" stroke-width="1.500" stroke="#b0b0b0"/></g>
<rect x="847.300" y="448.600" width="10.200" height="10.400" rx="1.500" fill="#fdfdfd" stroke="#8dc1ef" stroke-width="0.900"/><rect x="849.300" y="450.600" width="6.200" height="6.400" fill="#bdbdbd" stroke="none"/>
</svg>
<svg style="left:0;top:0" width="980" height="551"><rect x="736.20" y="526.00" width="241.80" height="24.00" fill="#fff"/></svg>
<svg style="left:0;top:0" width="980" height="551"><rect x="871.20" y="531.00" width="47.70" height="14.40" fill="#6a9bd6" rx="1.60" stroke="#5c8ecb" stroke-width="0.8"/></svg>
<div class="t" style="left:894.97px;top:534px;font-size:8.4px;color:#fff;transform:translateX(-50%);text-shadow:0 0 0.3px #fff;letter-spacing:-0.166px;">Speichern</div>
<svg style="left:0;top:0" width="980" height="551"><rect x="924.00" y="531.00" width="51.50" height="14.40" fill="#6a9bd6" rx="1.60" stroke="#5c8ecb" stroke-width="0.8"/></svg>
<div class="t" style="left:949.72px;top:534px;font-size:8.4px;color:#fff;transform:translateX(-50%);text-shadow:0 0 0.3px #fff;letter-spacing:-0.054px;">Abbrechen</div>
<svg style="left:0;top:0" width="980" height="551"><path d="M213.300 126 V117.800 Q213.300 116.400 214.500 116.400 Q215.800 116.400 215.800 117.800 V122 Q217 120.800 218 122 V123 Q219 121.600 220 122.700 V123.600 Q221 122.500 221.800 123.700 V127.500 Q221.800 131.700 217.500 131.700 Q214.500 131.700 212.800 129.300 L210.300 126.300 Q209.800 125 211 124.600 Q212 124.400 213.300 126 Z M215.800 122 V124.500 M218 123 V124.800 M220 123.600 V125" fill="#fff" stroke="#2b3a55" stroke-width="0.9" stroke-linejoin="round"/></svg>
<svg style="left:0;top:0" width="980" height="551" fill="none" stroke="#dcdcdc" stroke-width="0.8"><path d="M155 311 L152.300 314.300 L155 317.600 M731 334.500 L733.700 337.600 L731 340.700"/></svg>
<svg style="left:0;top:0" width="980" height="551"><rect x="0.00" y="0.00" width="980.00" height="1.00" fill="#909090"/></svg>
<svg style="left:0;top:0" width="980" height="551"><rect x="0.00" y="0.00" width="1.20" height="551.00" fill="#969696"/></svg>
<svg style="left:0;top:0" width="980" height="551"><rect x="0.00" y="550.00" width="980.00" height="1.00" fill="#b0b0b0"/></svg>
<svg style="left:0;top:0" width="980" height="551"><rect x="979.30" y="30.00" width="0.70" height="70.00" fill="#e0e0e0"/></svg>
<svg style="left:0;top:0" width="980" height="551"><rect x="979.40" y="1.00" width="0.60" height="29.00" fill="#fff"/></svg>
<svg style="left:0;top:0" width="980" height="551"><rect x="978.70" y="1.00" width="0.80" height="29.00" fill="#c4c4c4"/></svg>
<svg style="left:0;top:0" width="980" height="551"><rect x="978.80" y="99.50" width="1.00" height="451.00" fill="#b8b8b8"/></svg>
<!--BODY-->
</body></html>
